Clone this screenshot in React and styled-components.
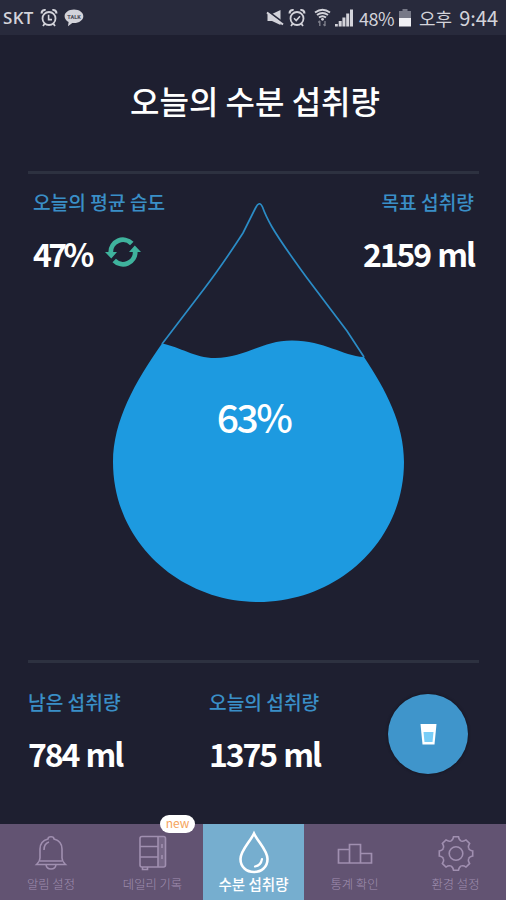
import React from 'react'
import styled, { createGlobalStyle } from 'styled-components'

const GlobalStyle = createGlobalStyle`
  * {
    box-sizing: border-box;
  }
  body {
    margin: 0;
    background: #1e1f30;
    font-family: 'Noto Sans CJK KR', sans-serif;
  }
  svg {
    display: block;
    flex: none;
  }
`

const Screen = styled.div`
  width: 506px;
  height: 900px;
  display: flex;
  flex-direction: column;
  background: #1e1f30;
  color: #fff;
  overflow: hidden;
`

const StatusBar = styled.header`
  height: 35px;
  flex: none;
  display: flex;
  justify-content: space-between;
  padding: 0 8px 0 3px;
  background: #282a3c;
  color: #d3d3da;
`

const StatusGroup = styled.div`
  display: flex;
  align-items: center;
`

const StatusText = styled.span`
  margin-left: ${({ $left }) => $left || 0}px;
  font-family: ${({ $latin }) => ($latin ? "'Open Sans', " : '')}'Noto Sans CJK KR', sans-serif;
  font-size: ${({ $size }) => $size}px;
  font-weight: ${({ $weight }) => $weight || 400};
  line-height: 24px;
  letter-spacing: ${({ $spacing }) => $spacing || 0}px;
  white-space: nowrap;
`

const StatusIcon = styled.svg`
  margin-left: ${({ $left }) => $left || 0}px;
`

const Title = styled.h1`
  height: 136px;
  flex: none;
  margin: 0;
  padding: 0 0 6px 4px;
  display: flex;
  align-items: center;
  justify-content: center;
  font-size: 32px;
  font-weight: 500;
`

const Divider = styled.div`
  height: 3px;
  flex: none;
  margin: 0 27px 0 28px;
  background: #2d3140;
`

const Stage = styled.main`
  height: 486px;
  flex: none;
  margin: 0 28px;
  display: grid;
  grid-template: 486px / 450px;

  > * {
    grid-area: 1 / 1;
  }
`

const StageStats = styled.div`
  display: flex;
  justify-content: space-between;
  padding: 16px 4px 0 5px;
`

const Stat = styled.div`
  display: flex;
  flex-direction: column;
  align-items: ${({ $end }) => ($end ? 'flex-end' : 'flex-start')};
  width: ${({ $width }) => ($width ? `${$width}px` : 'auto')};
`

const StatLabel = styled.div`
  font-size: 19.2px;
  font-weight: 500;
  line-height: 24px;
  color: #3a8fc7;
  white-space: nowrap;
`

const StatValue = styled.div`
  display: flex;
  align-items: center;
  margin-top: 21px;
  height: 36px;
  font-size: 32px;
  font-weight: 700;
  line-height: 36px;
  letter-spacing: ${({ $spacing }) => $spacing || -2.1}px;
  word-spacing: 2px;
  white-space: nowrap;
`

const RefreshIcon = styled.svg`
  margin: 0 0 2px 14px;
`

const Percent = styled.div`
  padding: 217px 0 0 1px;
  text-align: center;
  font-size: 39px;
  font-weight: 500;
  line-height: 50px;
  letter-spacing: -2.5px;
`

const Summary = styled.section`
  height: 161px;
  flex: none;
  display: flex;
  padding: 27px 38px 0 28px;
`

const DrinkButton = styled.button`
  width: 80px;
  height: 80px;
  margin: 4px 0 0 auto;
  padding: 0;
  border: 0;
  border-radius: 50%;
  display: flex;
  align-items: center;
  justify-content: center;
  background: #3f95cb;
  box-shadow: 0 0 3px #11121c;
`

const TabBar = styled.nav`
  height: 76px;
  flex: none;
  display: grid;
  grid-template-columns: 102px 101px 101px 101px 101px;
  background: #625372;
`

const Tab = styled.div`
  position: relative;
  display: flex;
  flex-direction: column;
  align-items: center;
  padding-top: 6px;
  background: ${({ $active }) => ($active ? '#76aecf' : 'transparent')};
  color: ${({ $active }) => ($active ? '#fff' : '#a08fb0')};
`

const TabLabel = styled.div`
  font-size: ${({ $active }) => ($active ? 14.5 : 12.3)}px;
  font-weight: ${({ $active }) => ($active ? 500 : 300)};
  line-height: 20px;
  white-space: nowrap;
`

const Badge = styled.div`
  position: absolute;
  top: -9px;
  left: 58px;
  width: 35px;
  height: 18px;
  border-radius: 9px;
  background: #fff;
  color: #f5a45c;
  font-size: 12px;
  line-height: 15px;
  text-align: center;
`

const AlarmIcon = ({ left, check }) => (
  <StatusIcon $left={left} width="18" height="20" viewBox="0 0 18 20" fill="none" stroke="currentColor">
    <circle cx="9" cy="10.5" r="6.5" strokeWidth="1.8" />
    <path d="M1.6 5.4C1.6 3 3.4 1.6 5.6 2.1M16.4 5.4C16.4 3 14.6 1.6 12.4 2.1" strokeWidth="2.2" />
    <path d="M4.8 15.5L3 18M13.2 15.5L15 18" strokeWidth="1.8" />
    <path d={check ? 'M6 10.3L8.2 12.5L12 8.2' : 'M8.6 6.8V11.6H12'} strokeWidth="1.6" />
  </StatusIcon>
)

const TalkIcon = () => (
  <StatusIcon $left={6} width="20" height="20" viewBox="0 0 20 20">
    <path d="M10 1.5C4.8 1.5 .6 4.4 .6 8.2c0 2.5 1.6 4.5 4 5.7L4 18.2l4.3-3.3c6 .7 11-2.4 11-6.7 0-3.8-4.1-6.7-9.3-6.7z" fill="currentColor" />
    <text x="10" y="10.5" textAnchor="middle" fontFamily="Roboto, sans-serif" fontWeight="900" fontSize="5.5" fill="#555663">TALK</text>
  </StatusIcon>
)

const MuteIcon = () => (
  <StatusIcon width="18" height="18" viewBox="0 0 18 18">
    <path d="M1.5 5H6L14.5 1V16L6 12H1.5z" fill="currentColor" />
    <path d="M1 1.5L17 13.5" stroke="#282a3c" strokeWidth="2" />
    <path d="M1 3.5L17 15.5" stroke="currentColor" strokeWidth="2" />
  </StatusIcon>
)

const WifiIcon = () => (
  <StatusIcon $left={8} width="17" height="19" viewBox="0 0 17 19" fill="none" stroke="currentColor">
    <path d="M1 4.5Q8.5 -1 16 4.5M3 7Q8.5 3 14 7M5 9.5Q8.5 6.8 12 9.5" strokeWidth="1.9" />
    <circle cx="8.5" cy="11.3" r="1.4" fill="currentColor" stroke="none" />
    <path d="M5.8 13V18M4.3 14.5L5.8 12.8M11 13V18M9.5 16.3L11 18" strokeWidth="1.4" opacity=".5" />
  </StatusIcon>
)

const SignalIcon = () => (
  <StatusIcon $left={4} width="18" height="18" viewBox="0 0 18 18" fill="currentColor">
    <path d="M0 15h2.8v2.5H0zM3.7 12h3v5.5h-3zM7.4 8.5h3v9h-3zM11.2 4.5h3v13h-3zM15 .5h3v17h-3z" />
  </StatusIcon>
)

const BatteryIcon = () => (
  <StatusIcon $left={5} width="12" height="18" viewBox="0 0 12 18">
    <path d="M3.5 0h5v2H12v7H0V2h3.5z" fill="#777987" />
    <path d="M0 9h12v8.5H0z" fill="#f0f0f4" />
  </StatusIcon>
)

const Refresh = () => (
  <RefreshIcon width="36" height="30" viewBox="0 0 36 30">
    <g fill="none" stroke="#3fb39d" strokeWidth="4.8">
      <path d="M5.8 15.5A12.2 12.2 0 0 1 26.8 6.5" />
      <path d="M30.2 14.5A12.2 12.2 0 0 1 9.2 23.5" />
    </g>
    <path d="M0 15H12L6.3 21.5zM24 15H36L29.8 8.5z" fill="#3fb39d" />
  </RefreshIcon>
)

const WaterDrop = () => (
  <svg width="450" height="486" viewBox="28 174 450 486">
    <path
      d="M162 343.5C181 347 194 358 215 358C246 358 261 340.5 292 340.5C325 340.5 342 356 364 357C386 390 404 424 404 462C404 542 337 602 258.5 602C180 602 113 542 113 462C113 421 135 382 162 343.5Z"
      fill="#1d9ae0"
    />
    <path
      d="M162 344L204 289C220 268 232 250 243 233L255.500 208Q259.500 200 262.500 207C265 214 268 220 272 227C282 244 294 260 307 278L347 331L364 357"
      fill="none"
      stroke="#2b8cc6"
      strokeWidth="1.7"
    />
  </svg>
)

const GlassIcon = () => (
  <svg width="17" height="22" viewBox="0 0 17 22">
    <path d="M.5 1h16L14.5 21.5h-12z" fill="#fff" />
    <path d="M3.5 9h10l-1 10h-8z" fill="#78cdf7" />
  </svg>
)

const BellIcon = () => (
  <svg width="36" height="44" viewBox="0 0 36 44" fill="none" stroke="currentColor" strokeWidth="1.6">
    <path d="M15 9C15 6 21 6 21 9C26.5 10.5 29 14.5 29 19V28C29 31.5 31 33 32.5 34.5H3.5C5 33 7 31.5 7 28V19C7 14.5 9.5 10.5 15 9Z" />
    <path d="M7 31H29M13 34.5Q13.5 39 18 39T23 34.5M11 20C11 15.5 12.5 13 16 12" />
  </svg>
)

const DrawerIcon = () => (
  <svg width="36" height="44" viewBox="0 0 36 44" fill="none" stroke="currentColor" strokeWidth="1.6">
    <path d="M23 6.5H30V36.5H23z" fill="currentColor" fillOpacity=".35" stroke="none" />
    <rect x="5" y="6.5" width="25.5" height="30.5" rx="2" />
    <path d="M23 6.5V37M5 16.5H23M5 27H23M7.5 37V39.5H12.5V37M27 14V18M27 25V29" />
  </svg>
)

const DropIcon = () => (
  <svg width="36" height="44" viewBox="0 0 36 44" fill="none" stroke="currentColor" strokeLinecap="round">
    <path d="M18 3.5C14 12 4.5 20.5 4.5 29C4.5 37 10.5 42 18 42S31.5 37 31.5 29C31.5 20.5 22 12 18 3.5Z" strokeWidth="2.6" />
    <path d="M26 29Q25 35.5 19 36.5" strokeWidth="2.2" />
  </svg>
)

const PodiumIcon = () => (
  <svg width="36" height="44" viewBox="0 0 36 44" fill="none" stroke="currentColor" strokeWidth="1.7">
    <path d="M1.5 19.5H12.5V33H1.5zM12.5 14.5H23.5V33H12.5zM23.5 23.5H34.5V33H23.5z" />
  </svg>
)

const GearIcon = () => (
  <svg width="36" height="44" viewBox="0 0 36 44" fill="none" stroke="currentColor" strokeWidth="1.6">
    <circle cx="18" cy="23.5" r="6.8" />
    {[0, 45, 90, 135, 180, 225, 270, 315].map((angle) => (
      <path
        key={angle}
        d="M-5.2 -12.6C-3.3 -13.3 -2.9 -14.5 -2.5 -16.7H2.5C2.9 -14.5 3.3 -13.3 5.2 -12.6"
        transform={`translate(18 23.5) rotate(${angle})`}
      />
    ))}
  </svg>
)

const tabs = [
  { label: '알림 설정', icon: BellIcon },
  { label: '데일리 기록', icon: DrawerIcon, badge: 'new' },
  { label: '수분 섭취량', icon: DropIcon, active: true },
  { label: '통계 확인', icon: PodiumIcon },
  { label: '환경 설정', icon: GearIcon },
]

const App = () => (
  <>
    <GlobalStyle />
    <Screen>
      <StatusBar>
        <StatusGroup>
          <StatusText $latin $size={17} $spacing={0.3} $weight={600}>SKT</StatusText>
          <AlarmIcon left={6} />
          <TalkIcon />
        </StatusGroup>
        <StatusGroup>
          <MuteIcon />
          <AlarmIcon left={4} check />
          <WifiIcon />
          <SignalIcon />
          <StatusText $left={6} $size={18} $spacing={-0.5}>48%</StatusText>
          <BatteryIcon />
          <StatusText $left={8} $size={18}>오후</StatusText>
          <StatusText $left={7} $size={20}>9:44</StatusText>
        </StatusGroup>
      </StatusBar>

      <Title>오늘의 수분 섭취량</Title>
      <Divider />

      <Stage>
        <WaterDrop />
        <StageStats>
          <Stat>
            <StatLabel>오늘의 평균 습도</StatLabel>
            <StatValue $spacing={-3.6}>
              47%
              <Refresh />
            </StatValue>
          </Stat>
          <Stat $end>
            <StatLabel>목표 섭취량</StatLabel>
            <StatValue>2159 ml</StatValue>
          </Stat>
        </StageStats>
        <Percent>63%</Percent>
      </Stage>

      <Divider />
      <Summary>
        <Stat $width={181}>
          <StatLabel>남은 섭취량</StatLabel>
          <StatValue>784 ml</StatValue>
        </Stat>
        <Stat>
          <StatLabel>오늘의 섭취량</StatLabel>
          <StatValue>1375 ml</StatValue>
        </Stat>
        <DrinkButton aria-label="drink">
          <GlassIcon />
        </DrinkButton>
      </Summary>

      <TabBar>
        {tabs.map(({ label, icon: Icon, active, badge }) => (
          <Tab key={label} $active={active}>
            <Icon />
            <TabLabel $active={active}>{label}</TabLabel>
            {badge && <Badge>{badge}</Badge>}
          </Tab>
        ))}
      </TabBar>
    </Screen>
  </>
)

export default App
